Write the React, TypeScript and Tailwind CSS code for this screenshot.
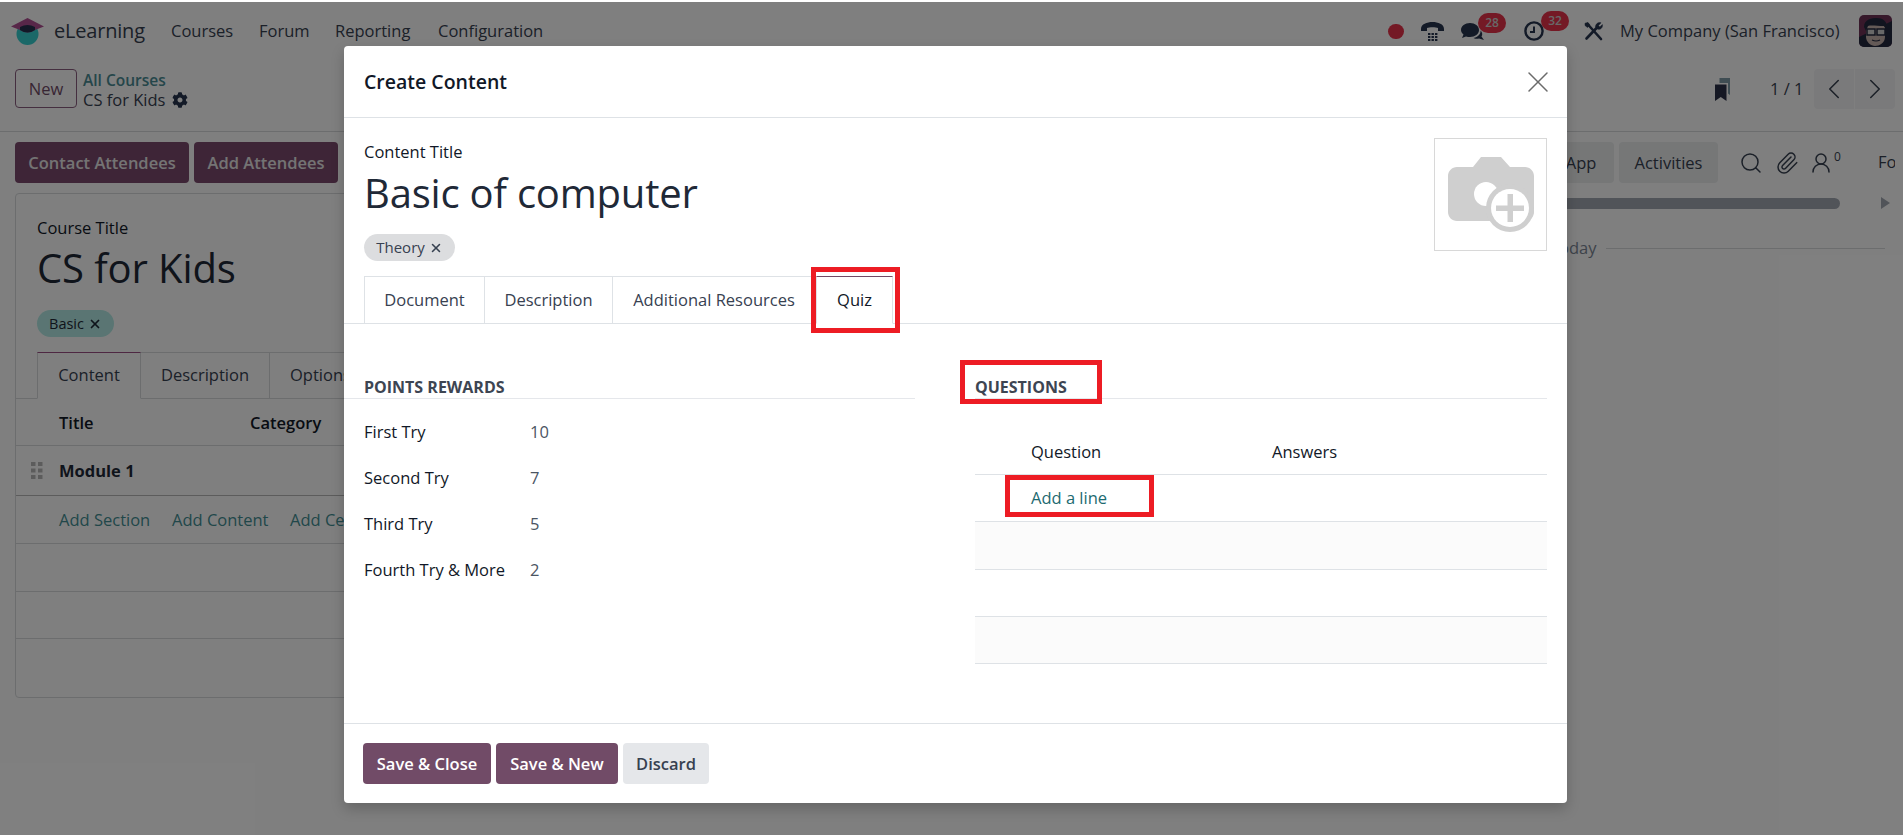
import React from "react";
import { Search, Paperclip, UserRound, ChevronLeft, ChevronRight, X } from "lucide-react";
import { FaCog } from "react-icons/fa";

const Logo = () => (
  <svg viewBox="0 0 33 27" className="w-[33px] h-[27px] shrink-0">
    <circle cx="16.5" cy="16" r="11" fill="#36d0d0" />
    <path d="M16.5 0 L33 8.5 L24 12 Q16.5 17 9 12 L0 8.5Z" fill="#b04f92" />
    <path d="M9 9 Q16.5 5 24 9 L24 12 Q16.5 17 9 12Z" fill="#26304f" />
  </svg>
);

const Phone = () => (
  <svg viewBox="0 0 23 19" className="w-[23px] h-[19px] ml-[17px] shrink-0" fill="#26344f">
    <path d="M0 7C0 2 6 0 11.5 0S23 2 23 7V9H17V6C15 5 8 5 6 6V9H0Z" />
    {[7, 10.5, 14].map((x) => [11, 14, 17].map((y) => <rect key={`${x}-${y}`} x={x} y={y} width="2.4" height="2" />))}
  </svg>
);

const Chat = () => (
  <svg viewBox="0 0 23 17" className="w-[23px] h-[17px] shrink-0" fill="#26344f">
    <path d="M9 0C14 0 18 3 18 7S14 14 9 14C7.5 14 6.5 14 5 13.5L1 15 2.5 11.5C1 10 0 9 0 7 0 3 4 0 9 0Z" />
    <path d="M19.5 7.5C20 10 18 14 12.5 15 14.5 16 16.5 16 18 15.5L23 17 20.5 13.5C22 11.5 21 9 19.5 7.5Z" />
  </svg>
);

const Clock = () => (
  <svg viewBox="0 0 20 20" className="w-[20px] h-[20px] shrink-0" fill="none" stroke="#26344f">
    <circle cx="10" cy="10" r="8.6" strokeWidth="2.4" />
    <path d="M10 5.5V11H6" strokeWidth="2" />
  </svg>
);

const Tools = () => (
  <svg viewBox="0 0 19 19" className="w-[19px] h-[19px] ml-[40px] shrink-0" fill="#26344f" stroke="#26344f">
    <path d="M3.5 2L17 17" strokeWidth="2.6" strokeLinecap="round" fill="none" />
    <path d="M13.5 5L2.5 16.5" strokeWidth="2.6" strokeLinecap="round" fill="none" />
    <path d="M11.5 5C11.5 2 14 0 17 0.8L14.5 3.5 15.8 5 18.4 2.6C19 5.6 16.5 8 13.8 7.2Z" strokeWidth="0.5" />
    <path d="M1 1.2L4 0.5 6 3 3.5 5.5 1 3.5Z" strokeWidth="0.5" />
  </svg>
);

const Avatar = () => (
  <svg viewBox="0 0 33 32" className="w-[33px] h-[32px] ml-[17px] rounded-[5px] shrink-0">
    <rect width="33" height="32" fill="#6e3357" />
    <path d="M0 22L33 6V32H0Z" fill="#23293f" />
    <path d="M7 13C7 7 25 7 26 13V22C26 28 20 31 16 31 12 31 7 27 7 22Z" fill="#c9b5ae" />
    <path d="M5 12C5 4 13 3 18 3S29 6 28 14L25 11C18 11 12 10 9 11L7 16Z" fill="#23293f" />
    <rect x="8" y="14" width="8" height="6" fill="#d0d0d0" stroke="#23293f" strokeWidth="1.5" />
    <rect x="18" y="14" width="8" height="6" fill="#d0d0d0" stroke="#23293f" strokeWidth="1.5" />
    <path d="M13 25Q17 27 21 25" stroke="#23293f" fill="none" strokeWidth="1.2" />
  </svg>
);

const Bookmarks = () => (
  <svg viewBox="0 0 15 23" className="w-[15px] h-[23px] shrink-0">
    <path d="M4.5 0H15V17L13 15.5V5H4.5Z" fill="#7e9aa6" />
    <path d="M0 6.5H11.5V23L5.75 19 0 23Z" fill="#2a3048" />
  </svg>
);

const Camera = () => (
  <svg viewBox="0 0 86 75" className="w-[86px] h-[75px]">
    <path d="M9 10H25L33 0H53L62 10H77C82 10 86 14 86 19V55C86 60 82 64 77 64H9C4 64 0 60 0 55V19C0 14 4 10 9 10Z" fill="#cfcfcf" />
    <circle cx="38" cy="37" r="12" fill="#fff" />
    <circle cx="62" cy="51" r="24" fill="#cfcfcf" />
    <circle cx="62" cy="51" r="19" fill="#fff" />
    <rect x="48" y="48.5" width="28" height="5.5" fill="#cfcfcf" />
    <rect x="59.5" y="37" width="5.5" height="28" fill="#cfcfcf" />
  </svg>
);

const Grip = () => (
  <svg viewBox="0 0 12 17" className="w-[12px] h-[17px] shrink-0" fill="#b9b9b9">
    {[0, 7].map((x) => [0, 6.5, 13].map((y) => <rect key={`${x}-${y}`} x={x} y={y} width="4.5" height="4" />))}
  </svg>
);

const Badge = ({ n }: { n: string }) => (
  <span className="absolute left-[17px] -top-[10px] w-[28px] h-[20px] rounded-full bg-[#e8324a] text-[#d0d0d0] text-[12px] font-semibold flex items-center justify-center">
    {n}
  </span>
);

const RedBox = ({ className }: { className: string }) => (
  <div className={`absolute border-[5px] border-[#ed1c24] pointer-events-none ${className}`} />
);

export default function App() {
  return (
    <div className="relative w-[1903px] h-[835px] overflow-hidden bg-white text-[16.5px] text-[#374151] font-['Open_Sans',sans-serif]">
      {/* page behind the dialog */}
      <nav className="h-[62px] flex items-center pl-[11px] pr-[11px]">
        <Logo />
        <span className="ml-[10px] text-[20px] tracking-[-0.2px] w-[117px]">eLearning</span>
        <span className="w-[88px]">Courses</span>
        <span className="w-[76px]">Forum</span>
        <span className="w-[103px]">Reporting</span>
        <span>Configuration</span>
        <div className="ml-auto flex items-center">
          <span className="w-[16px] h-[15px] rounded-full bg-[#e8324a]" />
          <Phone />
          <div className="relative ml-[17px]">
            <Chat />
            <Badge n="28" />
          </div>
          <div className="relative ml-[40px]">
            <Clock />
            <Badge n="32" />
          </div>
          <Tools />
          <span className="ml-[17px] w-[222px] whitespace-nowrap">My Company (San Francisco)</span>
          <Avatar />
        </div>
      </nav>

      <header className="h-[70px] border-b border-[#d8dadd] flex pl-[15px] pr-[8px] pt-[7px]">
        <button className="w-[62px] h-[39px] pt-[2px] border border-[#8a5f80] rounded-[4px] text-[#714b67] font-medium">New</button>
        <div className="ml-[6px] flex flex-col leading-[20px]">
          <span className="mt-[1px] text-[15.5px] font-semibold text-[#4a8c94]">All Courses</span>
          <span className="flex items-center">
            CS for Kids
            <FaCog className="ml-[7px] w-[16px] h-[16px] text-[#26344f]" />
          </span>
        </div>
        <div className="ml-auto flex items-center h-[40px]">
          <Bookmarks />
          <span className="ml-[40px] w-[44px] pt-[1px]">1 / 1</span>
          <div className="flex gap-[1px]">
            <span className="w-[40px] h-[40px] bg-[#f5f5f6] rounded-l-[4px] flex items-center justify-center">
              <ChevronLeft className="w-[34px] h-[34px] text-[#374151]" strokeWidth={1.1} />
            </span>
            <span className="w-[40px] h-[40px] bg-[#f5f5f6] rounded-r-[4px] flex items-center justify-center">
              <ChevronRight className="w-[34px] h-[34px] text-[#374151]" strokeWidth={1.1} />
            </span>
          </div>
        </div>
      </header>

      <main className="flex pl-[15px] pr-[8px]">
        <div className="w-[1485px] pr-[10px] pt-[10px]">
          <div className="flex gap-[5px]">
            <button className="w-[174px] h-[41px] pt-[1px] rounded-[4px] bg-[#7c4a6e] text-[#e8e8e8] font-semibold whitespace-nowrap">Contact Attendees</button>
            <button className="w-[144px] h-[41px] pt-[1px] rounded-[4px] bg-[#7c4a6e] text-[#e8e8e8] font-semibold whitespace-nowrap">Add Attendees</button>
          </div>
          <section className="mt-[10px] h-[505px] border border-[#d8dadd] rounded-[4px] px-[21px]">
            <div className="mt-[23px] h-[22px] leading-[22px] font-medium text-[#111827]">Course Title</div>
            <div className="mt-[2px] h-[54px] leading-[54px] text-[40px] tracking-[-0.1px] text-[#1f2937]">CS for Kids</div>
            <div className="mt-[15px] w-[77px] h-[27px] rounded-full bg-[#b4ebe6] text-[14.5px] text-[#1f2937] flex items-center justify-center gap-[4px]">
              Basic <X className="w-[14px] h-[14px]" strokeWidth={3} />
            </div>
            <div className="mt-[15px] -mx-[21px] px-[21px] h-[47px] border-b border-[#d8dadd] flex">
              <div className="w-[104px] h-[47px] border border-[#d8dadd] border-t-[#9c4f85] border-b-white bg-white flex items-center justify-center">Content</div>
              <div className="w-[129px] h-[46px] border-r border-t border-[#d8dadd] flex items-center justify-center">Description</div>
              <div className="pl-[20px] h-[46px] flex items-center border-r border-t border-[#d8dadd] pr-[20px]">Options</div>
            </div>
            <div className="-mx-[21px] h-[47px] border-b border-[#d8dadd] pl-[43px] pt-[2px] flex items-center font-semibold text-[#111827]">
              <span className="w-[191px]">Title</span>
              <span>Category</span>
            </div>
            <div className="-mx-[21px] h-[50px] border-b border-[#b8b8b8] pl-[15px] flex items-center font-bold text-[#1f2937]">
              <Grip />
              <span className="ml-[16px] pt-[1px]">Module 1</span>
            </div>
            <div className="-mx-[21px] h-[48px] border-b border-[#d8dadd] pl-[43px] pt-[2px] flex items-center text-[#438f94] whitespace-nowrap">
              <span className="w-[113px]">Add Section</span>
              <span className="w-[118px]">Add Content</span>
              <span>Add Certification</span>
            </div>
            <div className="-mx-[21px] h-[48px] border-b border-[#d8dadd]" />
            <div className="-mx-[21px] h-[47px] border-b border-[#d8dadd]" />
          </section>
        </div>

        <aside className="w-[395px] overflow-hidden pt-[10px]">
          <div className="flex items-center whitespace-nowrap">
            <button className="shrink-0 w-[114px] h-[41px] pt-[1px] rounded-[4px] bg-[#eceeef] font-medium">WhatsApp</button>
            <button className="shrink-0 ml-[5px] w-[99px] h-[41px] pt-[1px] rounded-[4px] bg-[#eceeef] font-medium">Activities</button>
            <Search className="shrink-0 ml-[21px] w-[24px] h-[24px]" strokeWidth={1.5} />
            <Paperclip className="shrink-0 ml-[12px] w-[24px] h-[24px]" strokeWidth={1.5} />
            <UserRound className="shrink-0 ml-[10px] w-[24px] h-[24px]" strokeWidth={1.5} />
            <span className="shrink-0 ml-[1px] -mt-[11px] text-[12px]">0</span>
            <span className="shrink-0 ml-[37px] font-medium">Follow</span>
          </div>
          <div className="mt-[14px] flex items-center">
            <div className="w-[340px] h-[11px] rounded-full bg-[#a3a9b3]" />
            <svg viewBox="0 0 9 12" className="ml-[41px] w-[9px] h-[12px]" fill="#a3a9b3"><path d="M0 0L9 6 0 12Z" /></svg>
          </div>
          <div className="mt-[27px] flex items-center pl-[50px] text-[#7d8796]">
            <span className="w-[56px]">Today</span>
            <span className="w-[279px] border-t border-[#d8dadd]" />
          </div>
        </aside>
      </main>

      {/* backdrop */}
      <div className="absolute inset-x-0 top-[2px] bottom-0 bg-black/50" />

      {/* dialog */}
      <div className="absolute left-[344px] top-[46px] w-[1223px] h-[757px] bg-white rounded-[4px] shadow-[0_6px_14px_rgba(0,0,0,0.2)] flex flex-col text-[#1f2937]">
        <div className="h-[72px] shrink-0 border-b border-[#dee2e6] flex items-center justify-between px-[20px]">
          <h2 className="text-[19.5px] pt-[1px] font-semibold text-[#111827]">Create Content</h2>
          <X className="w-[36px] h-[36px] mr-[-9px] text-[#6b6b6b]" strokeWidth={1} />
        </div>

        <div className="flex-1 px-[20px]">
          <div className="flex justify-between h-[158px]">
            <div>
              <div className="mt-[23px] h-[22px] leading-[22px] font-medium text-[#111827]">Content Title</div>
              <div className="mt-[3px] h-[54px] leading-[54px] text-[40px] tracking-[-0.2px] text-[#1f2937]">Basic of computer</div>
              <div className="mt-[14px] w-[91px] h-[27px] rounded-full bg-[#dcdddf] text-[15px] text-[#374151] flex items-center justify-center gap-[4px]">
                Theory <X className="w-[14px] h-[14px]" strokeWidth={2.6} />
              </div>
            </div>
            <div className="mt-[20px] w-[113px] h-[113px] border border-[#d8d8d8] flex items-center justify-center">
              <Camera />
            </div>
          </div>

          <div className="-mx-[20px] px-[20px] h-[48px] border-b border-[#dee2e6] flex text-[#374151]">
            <div className="w-[121px] h-[47px] border border-b-0 border-[#dee2e6] flex items-center justify-center">Document</div>
            <div className="w-[128px] h-[47px] border-y border-r border-b-0 border-[#dee2e6] flex items-center justify-center">Description</div>
            <div className="w-[203px] h-[47px] border-y border-r border-b-0 border-[#dee2e6] flex items-center justify-center whitespace-nowrap">Additional Resources</div>
            <div className="w-[77px] h-[48px] border border-b-white border-[#dee2e6] border-t-[#714b67] bg-white flex items-center justify-center text-[#111827]">Quiz</div>
          </div>

          <div className="flex gap-[60px] mt-[50px]">
            <div className="-ml-[20px] w-[571px]">
              <h3 className="pl-[20px] h-[25px] leading-[26px] border-b border-[#e5e7eb] text-[16px] font-bold uppercase text-[#3d4552]">Points Rewards</h3>
              <div className="mt-[10px] pl-[20px] grid grid-cols-[166px_1fr] auto-rows-[46px] items-center">
                {[["First Try", "10"], ["Second Try", "7"], ["Third Try", "5"], ["Fourth Try & More", "2"]].map(([k, v]) => (
                  <React.Fragment key={k}>
                    <span className="font-medium text-[#111827] whitespace-nowrap">{k}</span>
                    <span className="text-[#4b5563]">{v}</span>
                  </React.Fragment>
                ))}
              </div>
            </div>
            <div className="w-[572px]">
              <h3 className="h-[25px] leading-[26px] border-b border-[#e5e7eb] text-[16px] font-bold uppercase text-[#3d4552]">Questions</h3>
              <div className="mt-[31px] h-[45px] border-b border-[#dee2e6] grid grid-cols-[297px_1fr] items-center font-medium text-[#111827]">
                <span className="pl-[56px]">Question</span>
                <span>Answers</span>
              </div>
              <div className="h-[47px] pt-[1px] border-b border-[#dee2e6] pl-[56px] flex items-center text-[#1d6a70]">Add a line</div>
              <div className="h-[48px] border-b border-[#dee2e6] bg-[#fbfbfb]" />
              <div className="h-[47px] border-b border-[#dee2e6]" />
              <div className="h-[47px] border-b border-[#dee2e6] bg-[#fbfbfb]" />
            </div>
          </div>
        </div>

        <div className="h-[80px] shrink-0 border-t border-[#dee2e6] px-[19px] pt-[19px] flex gap-[5px] whitespace-nowrap">
          <button className="w-[128px] h-[41px] pt-[2px] rounded-[4px] bg-[#714b67] text-white font-semibold">Save &amp; Close</button>
          <button className="w-[122px] h-[41px] pt-[2px] rounded-[4px] bg-[#714b67] text-white font-semibold">Save &amp; New</button>
          <button className="w-[86px] h-[41px] pt-[2px] rounded-[4px] bg-[#e5e7ea] text-[#374151] font-semibold">Discard</button>
        </div>

        <RedBox className="left-[467px] top-[221px] w-[89px] h-[66px]" />
        <RedBox className="left-[616px] top-[314px] w-[142px] h-[44px]" />
        <RedBox className="left-[661px] top-[429px] w-[149px] h-[42px]" />
      </div>
    </div>
  );
}
